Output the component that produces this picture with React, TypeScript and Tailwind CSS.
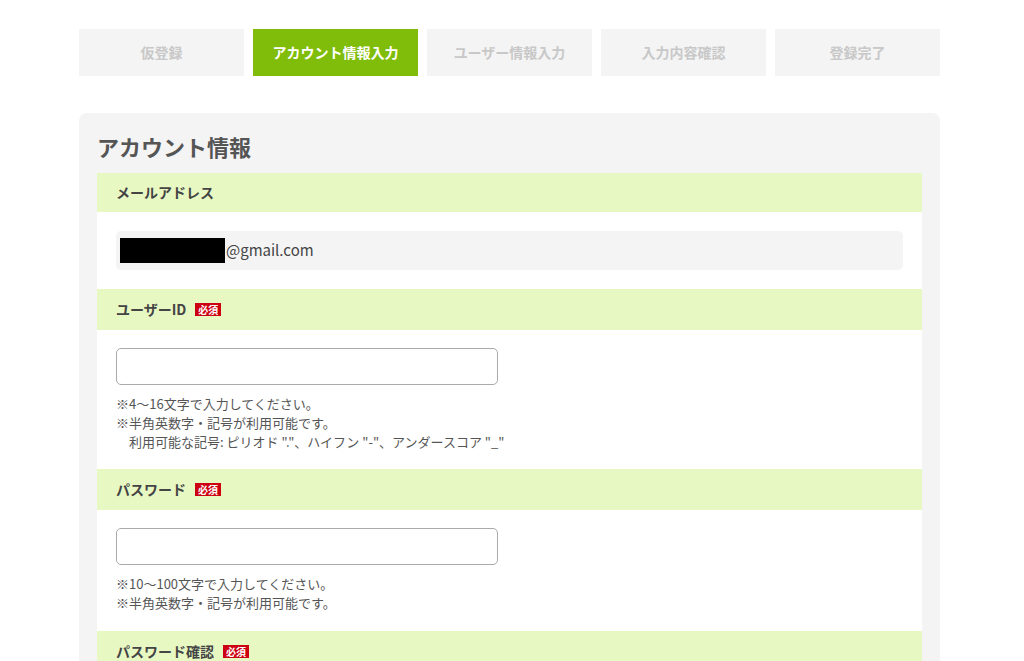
import React from 'react';

const steps = ['仮登録', 'アカウント情報入力', 'ユーザー情報入力', '入力内容確認', '登録完了'];

function Required() {
  return (
    <span className="ml-[9px] inline-flex h-[13px] w-[26px] items-center justify-center bg-[#cc0011] text-[10px] font-bold leading-none text-white">
      必須
    </span>
  );
}

function FieldHeader({ label, required }: { label: string; required?: boolean }) {
  return (
    <div
      className={`flex items-center bg-[#e8f8c3] px-[19px] text-[14px] font-bold text-[#444] ${
        required ? 'h-[41px]' : 'h-[39px]'
      }`}
    >
      {label}
      {required && <Required />}
    </div>
  );
}

function TextInput() {
  return <input type="text" className="block h-[37px] w-[382px] rounded-[5px] border border-[#aaa] bg-white px-2 text-[14px] outline-none" />;
}

export default function App() {
  return (
    <div
      className="min-h-screen bg-white pb-10 pt-[29px]"
      style={{ fontFamily: '"Noto Sans CJK JP", "Noto Sans", sans-serif' }}
    >
      <div className="ml-[79px] w-[861px]">
        {/* steps */}
        <div className="flex gap-[9px]">
          {steps.map((s, i) => (
            <div
              key={s}
              className={`flex h-[47px] w-[165px] items-center justify-center text-[14px] font-bold ${
                i === 1 ? 'bg-[#80bd0a] text-white' : 'bg-[#f4f4f4] text-[#c8c8c8]'
              }`}
            >
              {s}
            </div>
          ))}
        </div>

        {/* panel */}
        <div className="mt-[37px] rounded-[8px] bg-[#f4f4f4] px-[18px] pb-[18px] pt-[18px]">
          <h2 className="mb-[12px] text-[22px] font-bold leading-[30px] text-[#555]">アカウント情報</h2>

          <FieldHeader label="メールアドレス" />
          <div className="bg-white px-[19px] py-[19px]">
            <div className="flex h-[39px] items-center rounded-[5px] bg-[#f4f4f4] px-[4px] text-[15px] text-[#444]">
              <span className="inline-block h-[25px] w-[105px] bg-black" />
              <span className="ml-[1px]">@gmail.com</span>
            </div>
          </div>

          <FieldHeader label="ユーザーID" required />
          <div className="bg-white px-[19px] pb-[18px] pt-[18px]">
            <TextInput />
            <div className="mt-[9px] text-[13px] leading-[19px] text-[#555]">
              <p>※4〜16文字で入力してください。</p>
              <p>※半角英数字・記号が利用可能です。</p>
              <p className="pl-[13px]">利用可能な記号: ピリオド "."、ハイフン "-"、アンダースコア "_"</p>
            </div>
          </div>

          <FieldHeader label="パスワード" required />
          <div className="bg-white px-[19px] pb-[19px] pt-[18px]">
            <TextInput />
            <div className="mt-[9px] text-[13px] leading-[19px] text-[#555]">
              <p>※10〜100文字で入力してください。</p>
              <p>※半角英数字・記号が利用可能です。</p>
            </div>
          </div>

          <FieldHeader label="パスワード確認" required />
          <div className="bg-white px-[19px] pb-[19px] pt-[18px]">
            <TextInput />
          </div>
        </div>
      </div>
    </div>
  );
}
